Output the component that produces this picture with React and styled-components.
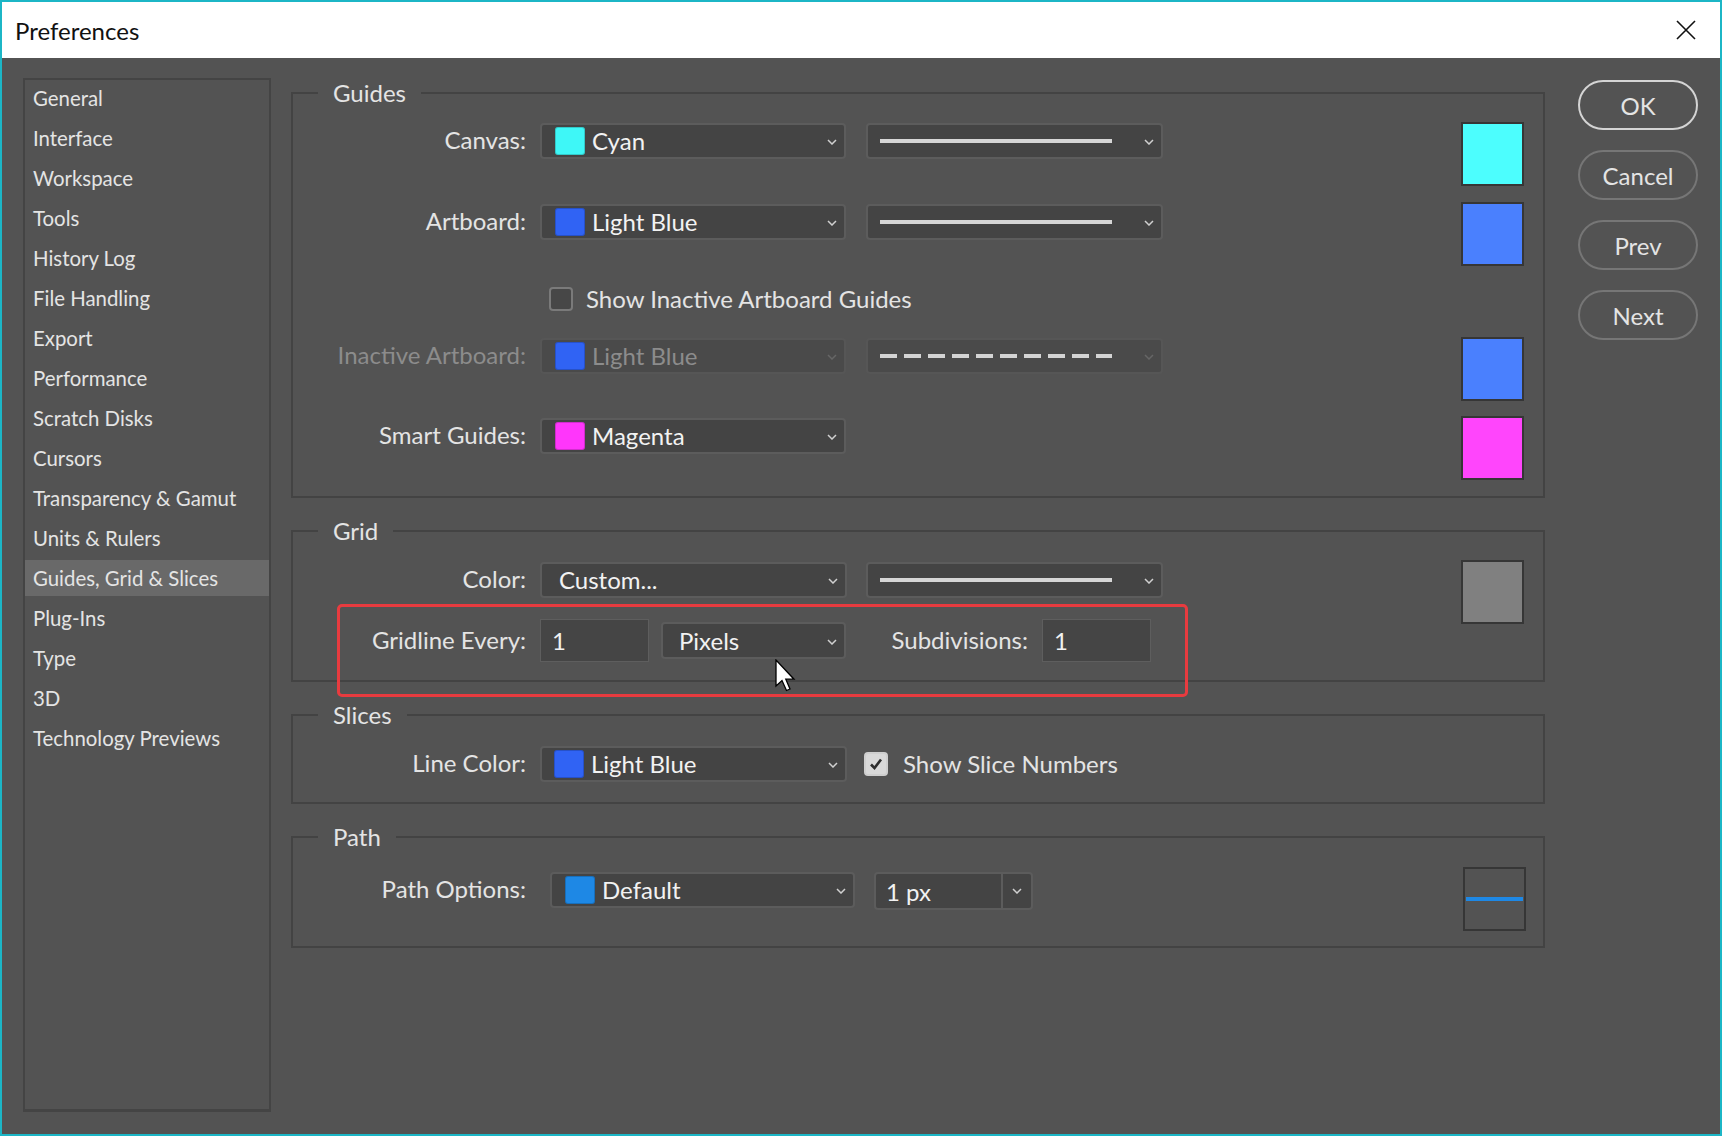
import React from "react";
import styled, { createGlobalStyle, css } from "styled-components";

const Global = createGlobalStyle`
  html, body { margin: 0; padding: 0; background: #535353; }
  body { font-family: Lato, "Segoe UI", "Noto Sans", sans-serif; -webkit-font-smoothing: antialiased; }
  * { box-sizing: border-box; }
`;

const TEXT = "#e4e4e4";
const DIM = "#8c8c8c";

const Window = styled.div`
  position: relative;
  width: 1722px;
  height: 1136px;
  border: 2px solid #1cb6c6;
  background: #535353;
  display: flex;
  flex-direction: column;
  overflow: hidden;
`;

const TitleBar = styled.div`
  height: 56px;
  flex-shrink: 0;
  background: #ffffff;
  display: flex;
  align-items: center;
  padding: 0 24px 0 13px;
`;

const Title = styled.div`
  font-size: 24px;
  color: #111;
  flex: 1;
`;

const CloseIcon = styled.svg`
  width: 20px;
  height: 20px;
  display: block;
`;

const Body = styled.div`
  flex: 1;
  display: flex;
  align-items: flex-start;
  padding: 20px 22px 0 21px;
`;

const Sidebar = styled.div`
  width: 248px;
  height: 1034px;
  border: 2px solid #444444;
  border-bottom-width: 3px;
  display: flex;
  flex-direction: column;
  gap: 4px;
  flex-shrink: 0;
`;

const NavItem = styled.div`
  height: 36px;
  line-height: 36px;
  padding-left: 8px;
  font-size: 20.4px;
  color: ${TEXT};
  white-space: nowrap;
  ${(p) => p.$active && css`background: #696969;`}
`;

const Main = styled.div`
  width: 1254px;
  margin-left: 20px;
  display: flex;
  flex-direction: column;
  gap: 18px;
  flex-shrink: 0;
`;

const Group = styled.fieldset`
  margin: 0;
  padding: 0;
  min-width: 0;
  border: 2px solid #434343;
`;

const Legend = styled.legend`
  margin-left: 25px;
  padding: 0 15px;
  font-size: 24px;
  line-height: 30px;
  color: ${TEXT};
`;

const GroupBody = styled.div`
  padding-bottom: ${(p) => p.$pb}px;
`;

const Row = styled.div`
  display: flex;
  align-items: flex-start;
  height: ${(p) => p.$h || 36}px;
  margin-top: ${(p) => p.$mt}px;
  padding-left: ${(p) => p.$indent || 0}px;
`;

const Label = styled.div`
  width: ${(p) => p.$w || 233}px;
  flex-shrink: 0;
  text-align: right;
  font-size: 24px;
  line-height: ${(p) => (p.$h || 36) - 2}px;
  color: ${(p) => (p.$disabled ? DIM : TEXT)};
  margin-left: ${(p) => p.$ml || 0}px;
  margin-right: ${(p) => (p.$mr === undefined ? 14 : p.$mr)}px;
  white-space: nowrap;
`;

const Select = styled.div`
  width: ${(p) => p.$w}px;
  height: ${(p) => p.$h || 36}px;
  margin-left: ${(p) => p.$ml || 0}px;
  align-self: ${(p) => (p.$center ? "center" : "flex-start")};
  flex-shrink: 0;
  display: flex;
  align-items: center;
  padding-left: ${(p) => (p.$pl === undefined ? 13 : p.$pl)}px;
  padding-right: 4px;
  background: ${(p) => (p.$disabled ? "#4a4a4a" : "#444444")};
  border: 2px solid ${(p) => (p.$disabled ? "#565656" : "#5c5c5c")};
  border-radius: 4px;
  font-size: 24px;
  color: ${(p) => (p.$disabled ? DIM : "#f2f2f2")};
`;

const SmallSwatch = styled.span`
  width: 30px;
  height: 28px;
  border-radius: 3px;
  background: ${(p) => p.$color};
  box-shadow: inset 0 0 0 1px rgba(0, 0, 0, 0.18);
  flex-shrink: 0;
  margin-right: 7px;
`;

const SelectText = styled.span`
  flex: 1;
  white-space: nowrap;
  line-height: 1;
`;

const Chevron = styled.svg`
  width: 10px;
  height: 6px;
  flex-shrink: 0;
  margin-left: auto;
  margin-right: 3px;
  margin-top: 2px;
  color: ${(p) => (p.$disabled ? "#666" : "#d0d0d0")};
`;

const LineSample = styled.span`
  width: 232px;
  height: 4px;
  flex-shrink: 0;
  ${(p) =>
    p.$dashed
      ? css`background: repeating-linear-gradient(to right, #d4d4d4 0 17px, transparent 17px 24px);`
      : css`background: #d6d6d6;`}
`;

const BigSwatch = styled.div`
  width: 63px;
  height: 64px;
  flex-shrink: 0;
  margin-left: auto;
  margin-right: ${(p) => p.$mr || 19}px;
  margin-top: ${(p) => p.$mt || -1}px;
  border: 2px solid #363636;
  background: ${(p) => p.$color};
  display: flex;
  align-items: center;
  padding: 0 1px;
`;

const PathLine = styled.span`
  width: 100%;
  height: 4px;
  background: #1e88e5;
`;

const CheckBox = styled.span`
  width: 24px;
  height: 24px;
  flex-shrink: 0;
  margin-left: ${(p) => p.$ml || 0}px;
  margin-top: 6px;
  border-radius: 4px;
  display: flex;
  align-items: center;
  justify-content: center;
  ${(p) =>
    p.$checked
      ? css`background: #d9d9d9; border: 2px solid #cfcfcf;`
      : css`background: #474747; border: 2px solid #7a7a7a;`}
`;

const CheckText = styled.span`
  font-size: 24px;
  line-height: 36px;
  color: ${TEXT};
  margin-left: ${(p) => p.$ml}px;
  white-space: nowrap;
`;

const NumberInput = styled.div`
  width: 109px;
  height: 43px;
  flex-shrink: 0;
  background: #454545;
  border: 1px solid #5e5e5e;
  font-size: 24px;
  line-height: 41px;
  padding-left: 11px;
  color: #f2f2f2;
`;

const Combo = styled.div`
  width: 159px;
  height: 38px;
  margin-left: 19px;
  flex-shrink: 0;
  display: flex;
  background: #444444;
  border: 2px solid #5c5c5c;
  border-radius: 4px;
  font-size: 24px;
  color: #f2f2f2;
`;

const ComboText = styled.div`
  flex: 1;
  display: flex;
  align-items: center;
  padding-left: 10px;
`;

const ComboButton = styled.div`
  width: 30px;
  border-left: 2px solid #5c5c5c;
  display: flex;
  align-items: center;
  justify-content: center;
`;

const Buttons = styled.div`
  margin-left: 33px;
  margin-top: 2px;
  display: flex;
  flex-direction: column;
  gap: 20px;
`;

const Button = styled.button`
  width: 120px;
  height: 50px;
  border-radius: 25px;
  background: transparent;
  border: 2px solid ${(p) => (p.$primary ? "#d4d4d4" : "#767676")};
  color: ${TEXT};
  font-family: inherit;
  font-size: 24px;
  padding: 0;
`;

const Highlight = styled.div`
  position: absolute;
  left: 335px;
  top: 602px;
  width: 851px;
  height: 93px;
  border: 3px solid #e83b3f;
  border-radius: 5px;
  pointer-events: none;
`;

const Cursor = styled.svg`
  position: absolute;
  left: 773px;
  top: 657px;
  width: 21px;
  height: 33px;
`;

const Chev = ({ disabled }) => (
  <Chevron $disabled={disabled} viewBox="0 0 10 6">
    <path d="M1 1 L5 5 L9 1" fill="none" stroke="currentColor" strokeWidth="1.5" />
  </Chevron>
);

const navItems = [
  "General", "Interface", "Workspace", "Tools", "History Log", "File Handling",
  "Export", "Performance", "Scratch Disks", "Cursors", "Transparency & Gamut",
  "Units & Rulers", "Guides, Grid & Slices", "Plug-Ins", "Type", "3D",
  "Technology Previews",
];

const LIGHT_BLUE = "#3063f4";
const LIGHT_BLUE_BIG = "#4a80fe";

export default function App() {
  return (
    <>
      <Global />
      <Window>
        <TitleBar>
          <Title>Preferences</Title>
          <CloseIcon viewBox="0 0 20 20">
            <path d="M1 1 L19 19 M19 1 L1 19" stroke="#111" strokeWidth="1.6" fill="none" />
          </CloseIcon>
        </TitleBar>
        <Body>
          <Sidebar>
            {navItems.map((n) => (
              <NavItem key={n} $active={n === "Guides, Grid & Slices"}>{n}</NavItem>
            ))}
          </Sidebar>
          <Main>
            <Group>
              <Legend>Guides</Legend>
              <GroupBody $pb={42}>
                <Row $mt={15}>
                  <Label>Canvas:</Label>
                  <Select $w={306}>
                    <SmallSwatch $color="#3ef7f7" />
                    <SelectText>Cyan</SelectText>
                    <Chev />
                  </Select>
                  <Select $w={297} $ml={20} $pl={12}>
                    <LineSample />
                    <Chev />
                  </Select>
                  <BigSwatch $color="#4cfefe" />
                </Row>
                <Row $mt={45}>
                  <Label>Artboard:</Label>
                  <Select $w={306}>
                    <SmallSwatch $color={LIGHT_BLUE} />
                    <SelectText>Light Blue</SelectText>
                    <Chev />
                  </Select>
                  <Select $w={297} $ml={20} $pl={12}>
                    <LineSample />
                    <Chev />
                  </Select>
                  <BigSwatch $color={LIGHT_BLUE_BIG} $mt={-2} />
                </Row>
                <Row $mt={41} $indent={256}>
                  <CheckBox />
                  <CheckText $ml={13}>Show Inactive Artboard Guides</CheckText>
                </Row>
                <Row $mt={21}>
                  <Label $disabled>Inactive Artboard:</Label>
                  <Select $w={306} $disabled>
                    <SmallSwatch $color={LIGHT_BLUE} />
                    <SelectText>Light Blue</SelectText>
                    <Chev disabled />
                  </Select>
                  <Select $w={297} $ml={20} $pl={12} $disabled>
                    <LineSample $dashed />
                    <Chev disabled />
                  </Select>
                  <BigSwatch $color={LIGHT_BLUE_BIG} />
                </Row>
                <Row $mt={44}>
                  <Label>Smart Guides:</Label>
                  <Select $w={306}>
                    <SmallSwatch $color="#ff36fb" />
                    <SelectText>Magenta</SelectText>
                    <Chev />
                  </Select>
                  <BigSwatch $color="#ff45fc" $mt={-2} />
                </Row>
              </GroupBody>
            </Group>

            <Group>
              <Legend>Grid</Legend>
              <GroupBody $pb={18}>
                <Row $mt={16}>
                  <Label>Color:</Label>
                  <Select $w={307} $pl={17}>
                    <SelectText>Custom...</SelectText>
                    <Chev />
                  </Select>
                  <Select $w={297} $ml={19} $pl={12}>
                    <LineSample />
                    <Chev />
                  </Select>
                  <BigSwatch $color="#808080" $mt={-2} />
                </Row>
                <Row $mt={21} $h={43}>
                  <Label $h={43}>Gridline Every:</Label>
                  <NumberInput>1</NumberInput>
                  <Select $w={185} $h={37} $ml={12} $pl={16} $center>
                    <SelectText>Pixels</SelectText>
                    <Chev />
                  </Select>
                  <Label $w={137} $h={43} $ml={45}>Subdivisions:</Label>
                  <NumberInput>1</NumberInput>
                </Row>
              </GroupBody>
            </Group>

            <Group>
              <Legend>Slices</Legend>
              <GroupBody $pb={20}>
                <Row $mt={16}>
                  <Label>Line Color:</Label>
                  <Select $w={307} $pl={12}>
                    <SmallSwatch $color={LIGHT_BLUE} />
                    <SelectText>Light Blue</SelectText>
                    <Chev />
                  </Select>
                  <CheckBox $checked $ml={17}>
                    <svg width="14" height="14" viewBox="0 0 14 14">
                      <path d="M2 7.5 L5.5 11 L12 2.5" fill="none" stroke="#2e2e2e" strokeWidth="2.6" />
                    </svg>
                  </CheckBox>
                  <CheckText $ml={15}>Show Slice Numbers</CheckText>
                </Row>
              </GroupBody>
            </Group>

            <Group>
              <Legend>Path</Legend>
              <GroupBody $pb={36}>
                <Row $mt={20} $h={38}>
                  <Label>Path Options:</Label>
                  <Select $w={305} $ml={10} $pl={13}>
                    <SmallSwatch $color="#1e88e5" />
                    <SelectText>Default</SelectText>
                    <Chev />
                  </Select>
                  <Combo>
                    <ComboText>1 px</ComboText>
                    <ComboButton>
                      <svg width="10" height="6" viewBox="0 0 10 6">
                        <path d="M1 1 L5 5 L9 1" fill="none" stroke="#d0d0d0" strokeWidth="1.5" />
                      </svg>
                    </ComboButton>
                  </Combo>
                  <BigSwatch $color="#535353" $mt={-5} $mr={17}>
                    <PathLine />
                  </BigSwatch>
                </Row>
              </GroupBody>
            </Group>
          </Main>
          <Buttons>
            <Button $primary>OK</Button>
            <Button>Cancel</Button>
            <Button>Prev</Button>
            <Button>Next</Button>
          </Buttons>
        </Body>
        <Highlight />
        <Cursor viewBox="0 0 21 33">
          <path
            d="M1 1 L1 27 L7 21.5 L11.5 31.5 L15 30 L10.8 20.2 L19 20.2 Z"
            fill="#ffffff"
            stroke="#000000"
            strokeWidth="1.3"
            strokeLinejoin="miter"
          />
        </Cursor>
      </Window>
    </>
  );
}
